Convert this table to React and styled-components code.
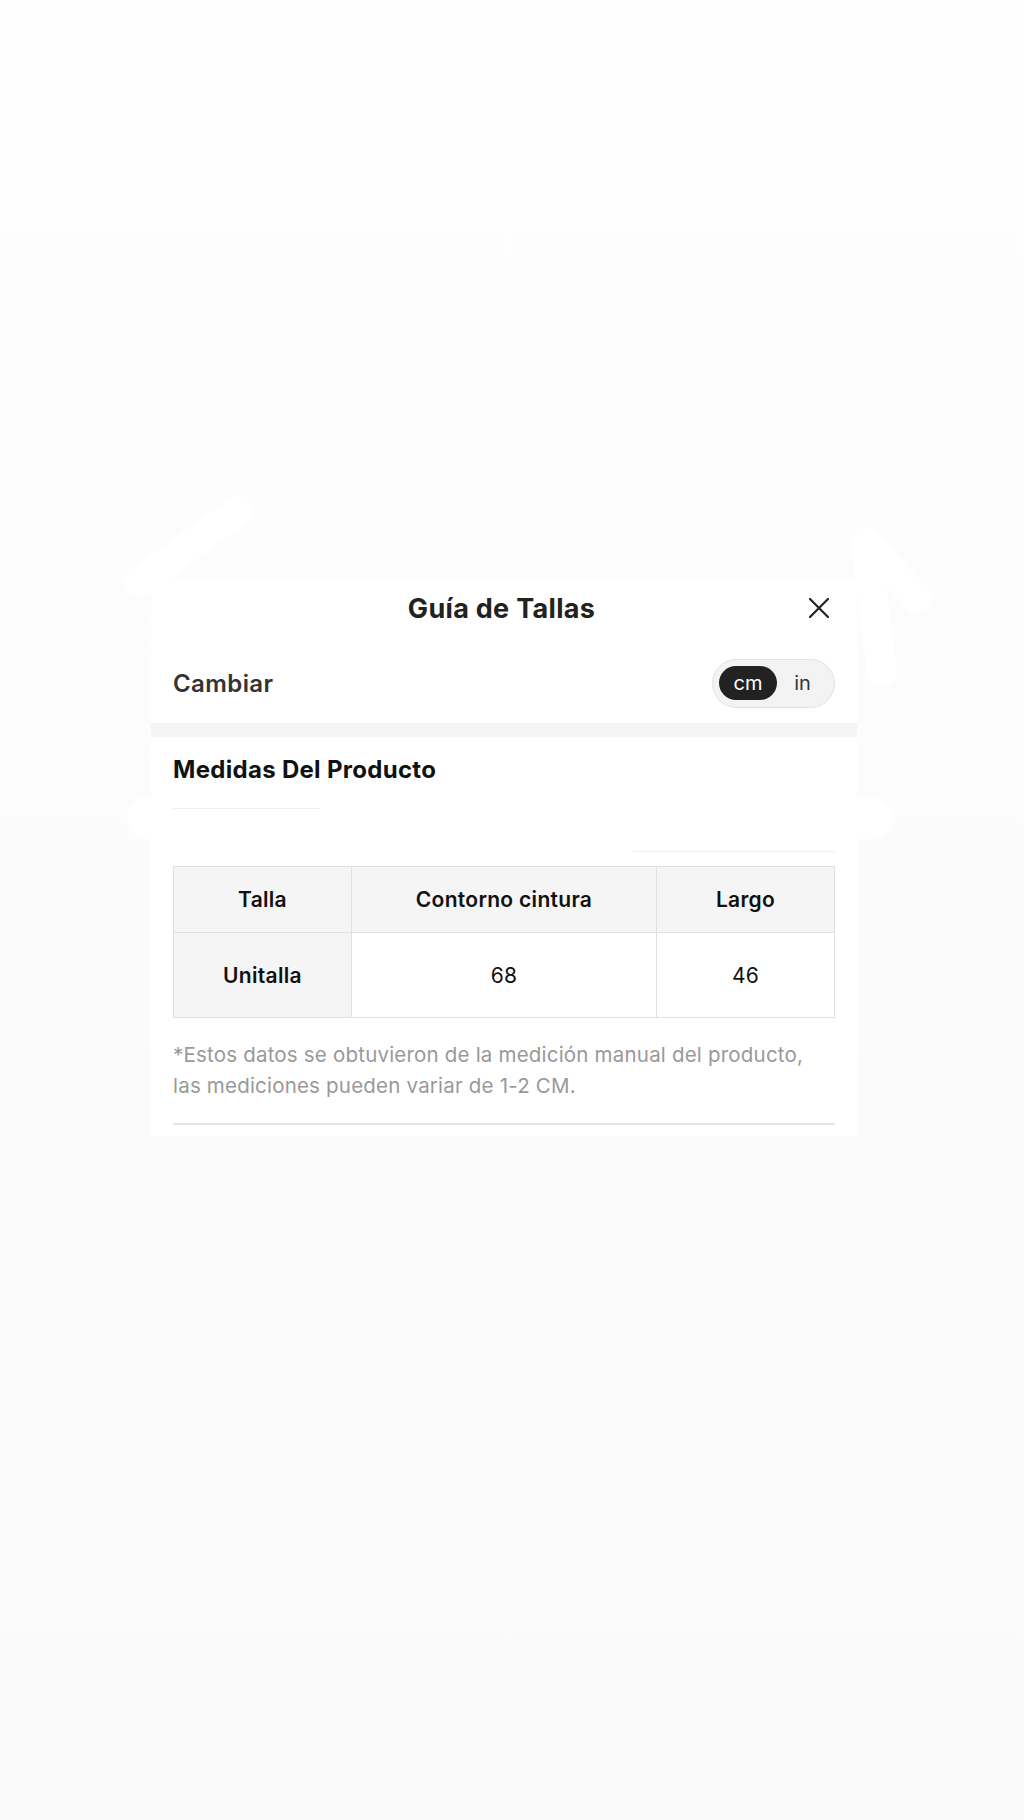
import React, { useState } from 'react';
import styled, { createGlobalStyle } from 'styled-components';

const GlobalStyle = createGlobalStyle`
  html, body {
    margin: 0;
    padding: 0;
  }
  body {
    font-family: Inter, "Noto Sans", "Liberation Sans", sans-serif;
    background: linear-gradient(180deg, #fefefe 0%, #fcfcfc 40%, #fafafa 100%);
    color: #222;
  }
`;

const Page = styled.div`
  position: relative;
  min-height: 1820px;
  padding-top: 578px;
  box-sizing: border-box;
`;

const Scribbles = styled.svg`
  position: absolute;
  top: 0;
  left: 0;
  pointer-events: none;
`;

const Panel = styled.div`
  position: relative;
  width: 706px;
  margin-left: 151px;
  background: #fff;
`;

const Header = styled.div`
  display: grid;
  grid-template-columns: 1fr auto 1fr;
  align-items: center;
  height: 60px;
  padding: 0 27px 0 22px;
`;

const Title = styled.h1`
  grid-column: 2;
  margin: 0;
  font-size: 27px;
  font-weight: 700;
  color: #222;
  letter-spacing: 0.3px;
`;

const CloseButton = styled.button`
  grid-column: 3;
  justify-self: end;
  display: flex;
  padding: 0;
  border: none;
  background: none;
  cursor: pointer;
  color: #222;
`;

const UnitRow = styled.div`
  display: flex;
  align-items: center;
  justify-content: space-between;
  height: 85px;
  padding: 5px 22px 0;
  box-sizing: border-box;
`;

const UnitLabel = styled.span`
  font-size: 24px;
  font-weight: 600;
  letter-spacing: 0.4px;
  color: #333;
`;

const Toggle = styled.div`
  display: flex;
  align-items: center;
  height: 49px;
  width: 123px;
  padding: 0 6px;
  box-sizing: border-box;
  border: 1px solid #e2e2e2;
  border-radius: 25px;
  background: #f3f3f3;
`;

const ToggleOption = styled.button`
  flex: ${(p) => (p.$active ? '0 0 58px' : '1')};
  height: 34px;
  border: none;
  border-radius: 17px;
  padding: 0;
  font-family: inherit;
  font-size: 20px;
  cursor: pointer;
  background: ${(p) => (p.$active ? '#222' : 'transparent')};
  color: ${(p) => (p.$active ? '#fff' : '#333')};
`;

const Band = styled.div`
  height: 14px;
  background: #f5f5f5;
`;

const Section = styled.div`
  display: flex;
  flex-direction: column;
  padding: 18px 22px 11px;
`;

const SectionTitle = styled.h2`
  margin: 0;
  font-size: 24px;
  line-height: 30px;
  font-weight: 700;
  letter-spacing: 0.3px;
  color: #111;
`;

const TabLine = styled.div`
  width: ${(p) => p.$width}px;
  height: 1px;
  margin-top: ${(p) => p.$gap}px;
  align-self: ${(p) => (p.$right ? 'flex-end' : 'flex-start')};
  background: #eef0f3;
`;

const Table = styled.div`
  display: grid;
  grid-template-columns: 178px 305px 1fr;
  margin-top: 14px;
  border-top: 1px solid #e0e0e0;
  border-left: 1px solid #e0e0e0;
`;

const Cell = styled.div`
  display: flex;
  align-items: center;
  justify-content: center;
  height: ${(p) => (p.$head ? 65 : 84)}px;
  border-right: 1px solid #e0e0e0;
  border-bottom: 1px solid #e0e0e0;
  background: ${(p) => (p.$shade ? '#f5f5f5' : '#fff')};
  font-size: 21px;
  letter-spacing: 0.3px;
  font-weight: ${(p) => (p.$bold ? 600 : 400)};
  color: #111;
`;

const Note = styled.p`
  margin: 21px 0 0;
  font-size: 20.5px;
  line-height: 31px;
  letter-spacing: 0.2px;
  color: #999;
`;

const Divider = styled.div`
  height: 2px;
  margin-top: 22px;
  background: #e4e4e4;
`;

const header = ['Talla', 'Contorno cintura', 'Largo'];
const rows = [['Unitalla', '68', '46']];

export default function App() {
  const [unit, setUnit] = useState('cm');

  return (
    <>
      <GlobalStyle />
      <Page>
        <Scribbles width="1024" height="1000" viewBox="0 0 1024 1000">
          <g stroke="#ffffff" strokeLinecap="round" strokeLinejoin="round" fill="none">
            <path d="M238 511 L139 582" strokeWidth="30" />
            <path d="M917 598 L866 543 L882 672" strokeWidth="30" />
            <path d="M148 818 L872 818" strokeWidth="42" />
          </g>
        </Scribbles>
        <Panel>
          <Header>
            <Title>Guía de Tallas</Title>
            <CloseButton aria-label="Cerrar">
              <svg width="22" height="22" viewBox="0 0 22 22">
                <path d="M2 2 L20 20 M20 2 L2 20" stroke="currentColor" strokeWidth="2.2" strokeLinecap="round" />
              </svg>
            </CloseButton>
          </Header>
          <UnitRow>
            <UnitLabel>Cambiar</UnitLabel>
            <Toggle>
              <ToggleOption $active={unit === 'cm'} onClick={() => setUnit('cm')}>cm</ToggleOption>
              <ToggleOption $active={unit === 'in'} onClick={() => setUnit('in')}>in</ToggleOption>
            </Toggle>
          </UnitRow>
          <Band />
          <Section>
            <SectionTitle>Medidas Del Producto</SectionTitle>
            <TabLine $width={147} $gap={23} />
            <TabLine $width={202} $gap={42} $right />
            <Table>
              {header.map((h) => (
                <Cell key={h} $head $shade $bold>{h}</Cell>
              ))}
              {rows.map((r) =>
                r.map((v, i) => (
                  <Cell key={r[0] + i} $shade={i === 0} $bold={i === 0}>{v}</Cell>
                ))
              )}
            </Table>
            <Note>
              *Estos datos se obtuvieron de la medición manual del producto,
              <br />
              las mediciones pueden variar de 1-2 CM.
            </Note>
            <Divider />
          </Section>
        </Panel>
      </Page>
    </>
  );
}
